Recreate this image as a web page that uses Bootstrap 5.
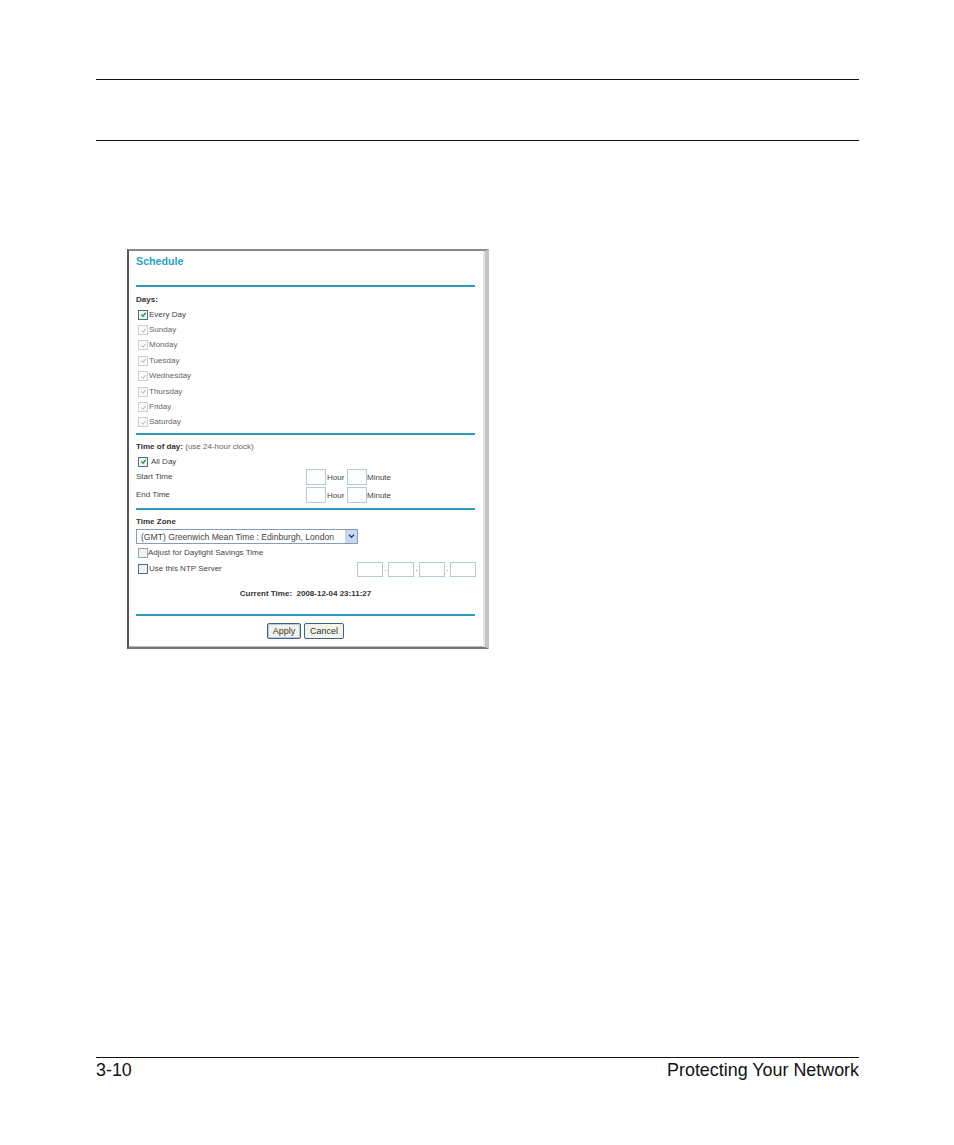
<!DOCTYPE html>
<html lang="en">
<head>
<meta charset="utf-8">
<title>Schedule</title>
<link rel="stylesheet" href="https://cdn.jsdelivr.net/npm/bootstrap@5.3.0/dist/css/bootstrap.min.css">
<style>
html,body{height:100%;background:#fff;color:#000;font-family:"Liberation Sans",Arial,sans-serif}
.pagebox{width:763px;height:1145px;margin-left:96px;padding-top:79px}
.rule-k{height:1px;background:#111}
.hdr-gap{height:60px}
.fig-gap{height:108px}
.shot{width:362px;height:400px;margin-left:31px;border-style:solid;border-width:2px 4px 2px 2px;border-color:#8a8a8a #c4c4c4 #777 #555;box-shadow:inset -2px 0 0 #e6e6e6,inset 0 -1px 0 #bbb;padding:0 7px;font-size:8px;line-height:1;color:#444}
.sched-title{height:34px;padding-top:5px;color:#2a9fc6;font-size:10.7px;font-weight:700}
.rule-b{height:2px;background:#2a9bbd;width:339px}
.lbl-b{font-weight:700;color:#333}
.r-days{height:10px;margin-top:8px}
.r-days-first{margin-top:9px}
.r-days-tod{height:11px}
.r-chk{height:15.4px;padding-left:2px;gap:1px}
.r-chk-allday{gap:3px}
.box{width:10px;height:10px;flex:none;border:1px solid #8fa6bc;background:#f4f4ee;display:flex;align-items:center;justify-content:center}
.box svg{width:7px;height:7px}
.box-off{border-color:#cfcfcf;background:#fafafa}
.box-off path{stroke:#bcbcbc}
.box-on path{stroke:#2aa02a}
.box-on{border-color:#4b6d92}
.box-dark{border-color:#4b6d92}
.muted-t{color:#666}
.r-days-list{padding-top:1px;height:127px}
.fld{height:16px;border:1px solid #b4c8da;background:#fff;flex:none}
.f-t{width:20px}
.f-ip{width:26px;height:15px}
.time-row{height:18px}
.time-row-last{height:21px}
.time-lbl{width:170px;padding-top:4px}
.unit{margin-top:5px}
.unit-h{width:21px;padding-left:1px}
.sel{width:222px;height:15px;margin-top:1px;border:1px solid #8a9db0;background:#fff;font-size:8.6px;color:#444;padding-left:4px;white-space:nowrap}
.sel-arrow{width:13px;height:13px;background:#c8d6f4;margin-left:auto;border-left:1px solid #fff}
.sel-arrow svg{width:7px;height:5px}
.r-adjust{height:17px;padding-left:2px;gap:0}
.r-ntp{height:16px;padding-left:2px;gap:1px;width:340px}
.ip-wrap{margin-left:auto}
.ip-dot{width:5px;text-align:center}
.cur-time{height:37px;padding-top:13px;width:339px;text-align:center}
.btn-row{width:339px;gap:3px;padding-top:7px}
.btn-x{font-size:9px;line-height:1;color:#333;background:#f4f3e8;border:1px solid #3f6284;border-radius:2px;height:16px;padding:0;display:flex;align-items:center;justify-content:center}
.b-a{width:34px;box-shadow:inset 0 0 0 1px #b4cbee}
.b-c{width:40px}
.foot-t{font-size:17.9px;line-height:1;padding-top:4px;color:#111}
.foot-gap{height:408px}
</style>
</head>
<body>
<div class="pagebox">
  <div class="rule-k"></div>
  <div class="hdr-gap"></div>
  <div class="rule-k"></div>
  <div class="fig-gap"></div>

  <div class="shot">
    <div class="sched-title">Schedule</div>
    <div class="rule-b"></div>
    <div class="r-days r-days-first lbl-b">Days:</div>
    <div class="r-days-list">
      <div class="d-flex align-items-center r-chk"><span class="box box-on"><svg viewBox="0 0 8 8"><path d="M1.5 4l2 2 3-4" fill="none" stroke-width="1.6"/></svg></span><span>Every Day</span></div>
      <div class="d-flex align-items-center r-chk muted-t"><span class="box box-off"><svg viewBox="0 0 8 8"><path d="M1.5 4l2 2 3-4" fill="none" stroke-width="1.2"/></svg></span><span>Sunday</span></div>
      <div class="d-flex align-items-center r-chk muted-t"><span class="box box-off"><svg viewBox="0 0 8 8"><path d="M1.5 4l2 2 3-4" fill="none" stroke-width="1.2"/></svg></span><span>Monday</span></div>
      <div class="d-flex align-items-center r-chk muted-t"><span class="box box-off"><svg viewBox="0 0 8 8"><path d="M1.5 4l2 2 3-4" fill="none" stroke-width="1.2"/></svg></span><span>Tuesday</span></div>
      <div class="d-flex align-items-center r-chk muted-t"><span class="box box-off"><svg viewBox="0 0 8 8"><path d="M1.5 4l2 2 3-4" fill="none" stroke-width="1.2"/></svg></span><span>Wednesday</span></div>
      <div class="d-flex align-items-center r-chk muted-t"><span class="box box-off"><svg viewBox="0 0 8 8"><path d="M1.5 4l2 2 3-4" fill="none" stroke-width="1.2"/></svg></span><span>Thursday</span></div>
      <div class="d-flex align-items-center r-chk muted-t"><span class="box box-off"><svg viewBox="0 0 8 8"><path d="M1.5 4l2 2 3-4" fill="none" stroke-width="1.2"/></svg></span><span>Friday</span></div>
      <div class="d-flex align-items-center r-chk muted-t"><span class="box box-off"><svg viewBox="0 0 8 8"><path d="M1.5 4l2 2 3-4" fill="none" stroke-width="1.2"/></svg></span><span>Saturday</span></div>
    </div>
    <div class="rule-b"></div>

    <div class="r-days r-days-tod"><span class="lbl-b">Time of day:</span> <span class="muted-t">(use 24-hour clock)</span></div>
    <div class="d-flex align-items-center r-chk r-chk-allday"><span class="box box-on"><svg viewBox="0 0 8 8"><path d="M1.5 4l2 2 3-4" fill="none" stroke-width="1.6"/></svg></span><span>All Day</span></div>
    <div class="d-flex time-row">
      <span class="time-lbl">Start Time</span>
      <span class="fld f-t"></span><span class="unit unit-h">Hour</span>
      <span class="fld f-t"></span><span class="unit">Minute</span>
    </div>
    <div class="d-flex time-row-last">
      <span class="time-lbl">End Time</span>
      <span class="fld f-t"></span><span class="unit unit-h">Hour</span>
      <span class="fld f-t"></span><span class="unit">Minute</span>
    </div>
    <div class="rule-b"></div>

    <div class="r-days lbl-b">Time Zone</div>
    <div class="sel d-flex align-items-center"><span>(GMT) Greenwich Mean Time : Edinburgh, London</span><span class="sel-arrow d-flex align-items-center justify-content-center"><svg viewBox="0 0 8 6"><path d="M1 1l3 3 3-3" fill="none" stroke="#1f3f8f" stroke-width="1.6"/></svg></span></div>
    <div class="d-flex align-items-center r-adjust"><span class="box"></span><span>Adjust for Daylight Savings Time</span></div>
    <div class="d-flex align-items-center r-ntp">
      <span class="box box-dark"></span><span>Use this NTP Server</span>
      <div class="d-flex align-items-center ip-wrap">
        <span class="fld f-ip"></span><span class="ip-dot">.</span>
        <span class="fld f-ip"></span><span class="ip-dot">.</span>
        <span class="fld f-ip"></span><span class="ip-dot">.</span>
        <span class="fld f-ip"></span>
      </div>
    </div>
    <div class="lbl-b cur-time">Current Time:&nbsp; 2008-12-04 23:11:27</div>
    <div class="rule-b"></div>
    <div class="d-flex justify-content-center btn-row">
      <button type="button" class="btn-x b-a">Apply</button>
      <button type="button" class="btn-x b-c">Cancel</button>
    </div>
  </div>

  <div class="foot-gap"></div>
  <div class="rule-k"></div>
  <div class="d-flex justify-content-between foot-t"><span>3-10</span><span>Protecting Your Network</span></div>
</div>
</body>
</html>
